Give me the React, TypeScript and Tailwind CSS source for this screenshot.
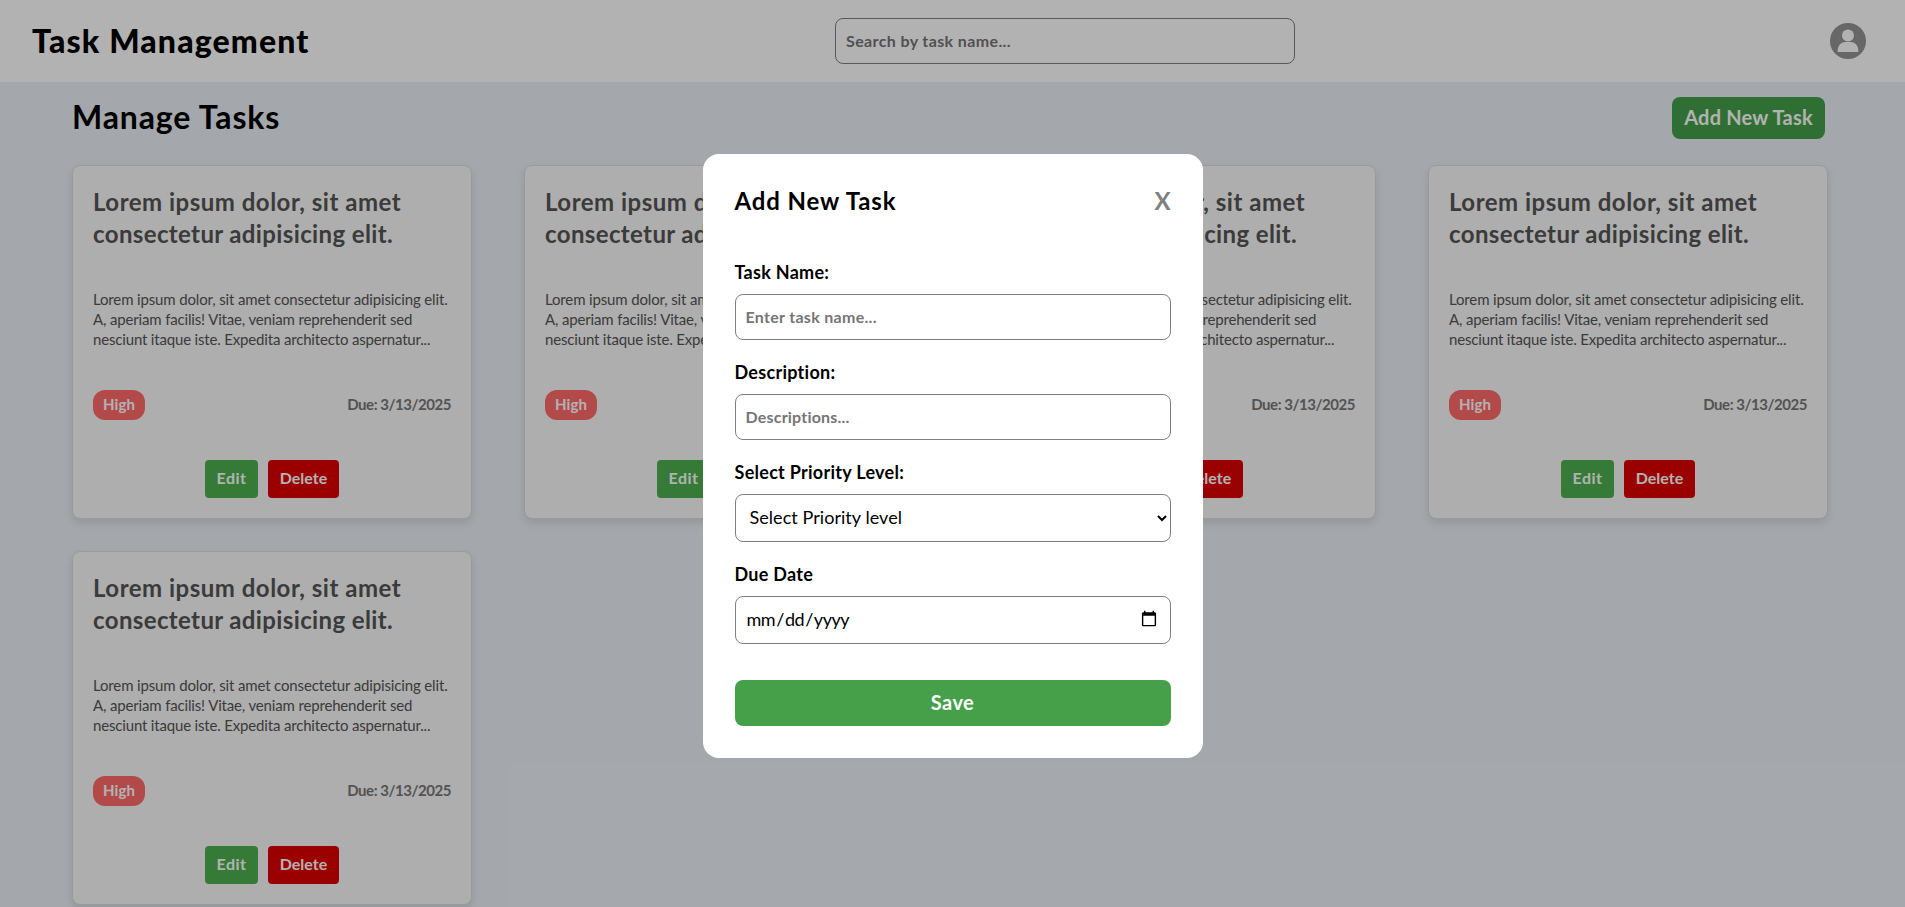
import type { ReactNode } from "react";

const tasks = [1, 2, 3, 4, 5];

function Avatar() {
  return (
    <svg viewBox="0 0 36 36" className="size-9" aria-hidden="true">
      <circle cx="18" cy="18" r="18" fill="#949494" />
      <circle cx="18" cy="12.4" r="6" fill="#fff" />
      <path d="M7.7 29V27.6C7.7 22.6 11 19 15.2 19h5.6c4.2 0 7.5 3.6 7.5 8.6V29z" fill="#fff" />
    </svg>
  );
}

function TaskCard() {
  return (
    <article className="flex h-[354px] w-[400px] flex-col rounded-lg border border-[#ddd] bg-[#f9f9f9] p-5 shadow-[0_4px_8px_rgba(0,0,0,0.1)]">
      <h2 className="text-2xl leading-8 font-bold text-[#555]">
        <span className="block tracking-[0.5px]">Lorem ipsum dolor, sit amet</span>
        <span className="block tracking-[0.37px]">consectetur adipisicing elit.</span>
      </h2>
      <p className="mt-[39px] text-[15px] leading-5 whitespace-nowrap text-[#555]">
        <span className="block tracking-[-0.146px]">Lorem ipsum dolor, sit amet consectetur adipisicing elit.</span>
        <span className="block tracking-[-0.157px]">A, aperiam facilis! Vitae, veniam reprehenderit sed</span>
        <span className="block tracking-[-0.171px]">nesciunt itaque iste. Expedita architecto aspernatur...</span>
      </p>
      <div className="mt-[41px] flex items-center justify-between text-[15px] leading-5 font-bold">
        <span className="flex h-[30px] w-[52px] items-center justify-center rounded-xl bg-[#ff6b6b] pb-0.5 tracking-[0.1px] text-white">
          High
        </span>
        <span className="pb-0.5 tracking-[-0.46px] text-[#777]">Due: 3/13/2025</span>
      </div>
      <div className="mt-10 flex justify-center gap-2.5 font-bold text-white">
        <button className="h-[38px] w-[53px] rounded bg-[#4caf50] pb-0.5 tracking-[0.5px]">Edit</button>
        <button className="h-[38px] w-[71px] rounded bg-[#dd0000] pb-0.5">Delete</button>
      </div>
    </article>
  );
}

function Field({ label, children }: { label: string; children: ReactNode }) {
  return (
    <label className="flex flex-col gap-2">
      <span className="text-lg leading-7 font-bold tracking-[0.28px]">{label}</span>
      {children}
    </label>
  );
}

export default function App() {
  return (
    <div className="relative h-[907px] overflow-hidden bg-[#ebf0f5] font-['Lato',sans-serif] text-black">
      <header className="flex h-[82px] items-center bg-white pr-[39px] pl-8">
        <h1 className="w-[803px] text-[32px] leading-10 font-black tracking-[1.14px]">Task Management</h1>
        <input
          className="h-[46px] w-[460px] rounded-lg border border-[#808080] px-2.5 pb-0.5 font-bold tracking-[0.38px] placeholder:text-[#757575]"
          placeholder="Search by task name..."
        />
        <div className="ml-auto">
          <Avatar />
        </div>
      </header>

      <main className="px-[72px]">
        <div className="flex h-[83px] items-start justify-between pt-[15px] pr-2">
          <h2 className="text-[32px] leading-10 font-bold tracking-[0.85px]">Manage Tasks</h2>
          <button className="h-[42px] w-[153px] rounded-lg bg-[#45a049] pb-0.5 text-xl font-bold tracking-[0.2px] text-white">
            Add New Task
          </button>
        </div>
        <div className="grid w-fit grid-cols-4 gap-x-[52px] gap-y-8">
          {tasks.map((id) => (
            <TaskCard key={id} />
          ))}
        </div>
      </main>

      <div className="absolute inset-0 flex items-start justify-center bg-black/30 pt-[154px]">
        <section className="flex h-[604px] w-[500px] flex-col rounded-2xl bg-white p-8">
          <div className="mb-10 flex h-8 items-center justify-between pb-0.5 text-2xl leading-8 font-bold">
            <h2 className="tracking-[0.88px]">Add New Task</h2>
            <button className="text-[#808080]">X</button>
          </div>
          <form className="flex flex-col gap-[18px]">
            <Field label="Task Name:">
              <input
                className="h-[46px] rounded-lg border border-[#808080] px-2.5 pb-0.5 font-bold tracking-[0.3px] placeholder:text-[#757575]"
                placeholder="Enter task name..."
              />
            </Field>
            <Field label="Description:">
              <input
                className="h-[46px] rounded-lg border border-[#808080] px-2.5 pb-0.5 font-bold tracking-[0.2px] placeholder:text-[#757575]"
                placeholder="Descriptions..."
              />
            </Field>
            <Field label="Select Priority Level:">
              <select className="h-12 rounded-lg border border-[#808080] bg-white px-2.5 pr-0 pb-0.5 text-lg tracking-[0.05px]">
                <option>Select Priority level</option>
                <option>High</option>
                <option>Medium</option>
                <option>Low</option>
              </select>
            </Field>
            <Field label="Due Date">
              <input type="date" className="h-12 rounded-lg border border-[#808080] px-2.5 pb-0.5 text-lg tracking-[-0.45px]" />
            </Field>
            <button
              type="button"
              className="mt-[18px] h-[46px] rounded-lg bg-[#45a049] pb-0.5 text-xl font-bold tracking-[0.4px] text-white"
            >
              Save
            </button>
          </form>
        </section>
      </div>
    </div>
  );
}
